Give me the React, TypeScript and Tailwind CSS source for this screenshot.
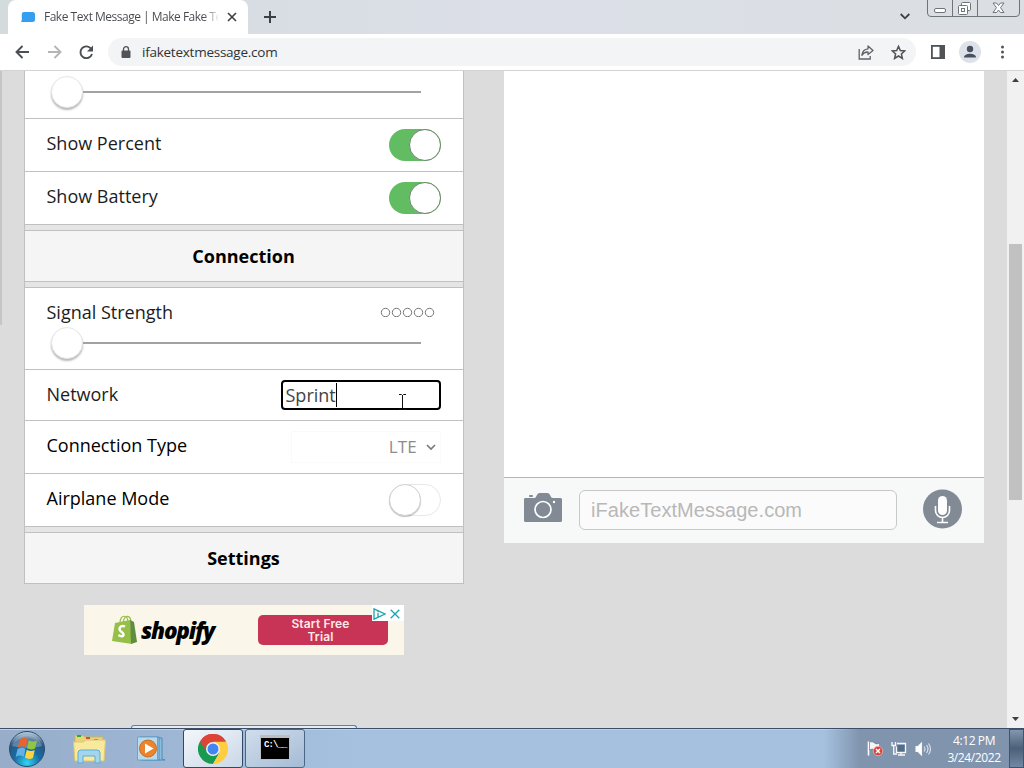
import React, { useState } from 'react';

const TabStrip: React.FC = () => (
  <div className="flex h-[34px] items-end bg-linear-to-r from-[#d3dbdd] via-[#dcdfe8] to-[#dbdfe3]">
    <div className="ml-2 flex h-[34px] w-[240px] items-center rounded-t-lg bg-white pl-[13px]">
      <svg width="14" height="10" viewBox="0 0 14 10">
        <path d="M2.500 0h9Q14 0 14 2.500v5q0 2.500-2.500 2.500H0l.8-2V2.500Q.8 0 2.500 0z" fill="#349ff0" />
      </svg>
      <div className="ml-[9px] w-[177px] whitespace-nowrap bg-linear-to-r from-[#45484c] from-90% to-white to-99% bg-clip-text text-[12px] tracking-[-0.5px] text-transparent">
        Fake Text Message | Make Fake Te
      </div>
      <svg className="ml-[6px]" width="10" height="10" viewBox="0 0 10 10" stroke="#3c4043" strokeWidth="1.6">
        <path d="M1 1l8 8M9 1L1 9" />
      </svg>
    </div>
    <svg className="mb-[11px] ml-4" width="12" height="12" viewBox="0 0 12 12" stroke="#3c4043" strokeWidth="2">
      <path d="M6 0v12M0 6h12" />
    </svg>
    <svg className="mb-[14px] ml-auto" width="10" height="7" viewBox="0 0 10 7" fill="none" stroke="#3c4043" strokeWidth="1.800">
      <path d="M0.7 1L5 5.3L9.3 1" />
    </svg>
    <svg className="ml-[17px] self-start" width="97" height="18" viewBox="0 0 97 18" fill="none" stroke="#6d7579">
      <path d="M.5 0v13q0 3.500 3.500 3.500h85q3.500 0 3.500-3.500V0M25.500 0v16.500M50.500 0v16.500" />
      <rect x="7.500" y="8.500" width="11" height="4" rx="1.500" fill="#fff" />
      <rect x="34.500" y="2.500" width="9" height="8" rx="1" fill="#fff" />
      <rect x="31.500" y="5.500" width="9" height="9" rx="1" fill="#fff" />
      <rect x="34.500" y="8.500" width="3" height="3" />
      <path d="M66 3h3.500l2 2.500l2-2.500H77l-3.500 4.700L77 12.500h-3.500l-2-2.500l-2 2.500H66l3.500-4.800z" fill="#fff" />
    </svg>
  </div>
);

const Toolbar: React.FC = () => (
  <div className="flex h-[37px] items-center border-b border-[#d4d4d4] bg-white">
    <svg className="ml-[15px]" width="15" height="14" viewBox="0 0 15 14" fill="none" stroke="#4b4e52" strokeWidth="1.9">
      <path d="M14 7H2M7.500 1L1.500 7l6 6" />
    </svg>
    <svg className="ml-[17px]" width="15" height="14" viewBox="0 0 15 14" fill="none" stroke="#b4b5b7" strokeWidth="1.9">
      <path d="M1 7h12M7.500 1l6 6l-6 6" />
    </svg>
    <svg className="ml-[17px]" width="15" height="15" viewBox="0 0 15 15" fill="none" stroke="#4b4e52" strokeWidth="1.9">
      <path d="M12.300 4A5.900 5.900 0 1 0 13 9" />
      <path d="M14 .5v6H8z" fill="#4b4e52" stroke="none" />
    </svg>
    <div className="ml-[14px] flex h-7 w-[808px] items-center rounded-full bg-[#f2f4f5] pl-[13px]">
      <svg width="10" height="13" viewBox="0 0 10 13">
        <rect x="0.500" y="4.500" width="9" height="7.500" rx="1" fill="#505357" />
        <path d="M2.500 5V3.200a2.500 2.500 0 0 1 5 0V5" fill="none" stroke="#505357" strokeWidth="1.300" />
      </svg>
      <span className="ml-[11px] text-[13.500px] tracking-[-0.25px] text-[#303336]">ifaketextmessage.com</span>
      <svg className="ml-auto" width="16" height="15" viewBox="0 0 16 15" fill="none" stroke="#5f6368" strokeWidth="1.300">
        <path d="M1.200 4v10h11v-3" />
        <path d="M10 1l5 4.500l-5 4V7Q6 6.800 3.800 10.300Q4.500 4.400 10 3.800z" strokeLinejoin="round" />
      </svg>
      <svg className="ml-[17px] mr-[10px]" width="15" height="15" viewBox="0 0 15 15" fill="none" stroke="#505357" strokeWidth="1.500">
        <path d="M7.500 1.300l1.800 4.200l4.500.4l-3.400 3l1 4.500l-3.900-2.400l-3.900 2.400l1-4.500l-3.400-3l4.500-.4z" />
      </svg>
    </div>
    <svg className="ml-[15px]" width="14" height="14" viewBox="0 0 14 14">
      <rect x="0.900" y="0.900" width="12.200" height="12.200" fill="none" stroke="#505357" strokeWidth="1.800" />
      <rect x="8.500" y="0" width="5.500" height="14" fill="#505357" />
    </svg>
    <svg className="ml-[14px]" width="22" height="22" viewBox="0 0 22 22">
      <circle cx="11" cy="11" r="11" fill="#dde1e8" />
      <circle cx="11" cy="8" r="3.200" fill="#48505f" />
      <path d="M5 16.500c0-5 12-5 12 0z" fill="#48505f" />
    </svg>
    <svg className="ml-5" width="4" height="14" viewBox="0 0 4 14" fill="#505357">
      <circle cx="1.500" cy="2" r="1.500" />
      <circle cx="1.500" cy="7" r="1.500" />
      <circle cx="1.500" cy="12" r="1.500" />
    </svg>
  </div>
);

const Slider: React.FC = () => (
  <div className="flex h-8 items-center pl-[26px]">
    <div className="h-8 w-8 rounded-full border border-[#e6e6e6] bg-white shadow-[0_2px_2px_rgba(0,0,0,0.28)]" />
    <div className="h-[2px] w-[338px] bg-[#a2a2a2]" />
  </div>
);

const Toggle: React.FC<{ initial: boolean }> = ({ initial }) => {
  const [on, setOn] = useState(initial);
  return (
    <button
      onClick={() => setOn(!on)}
      className={
        on
          ? 'flex h-8 w-[52px] justify-end rounded-full bg-[#62bd62]'
          : 'flex h-8 w-[52px] justify-start rounded-full border border-[#e8e8e8] bg-white'
      }
    >
      <span
        className={
          on
            ? 'h-8 w-8 rounded-full border border-[#6c876c] bg-white'
            : '-ml-px -mt-px h-8 w-8 rounded-full border border-[#d2d2d2] bg-white shadow-[0_1px_1px_rgba(0,0,0,0.25)]'
        }
      />
    </button>
  );
};

const Heading: React.FC<{ children: React.ReactNode }> = ({ children }) => (
  <h2 className="flex h-[52px] items-center justify-center border-y border-[#c0c0c0] bg-[#f5f5f5] pr-px text-[18px] font-bold text-black">
    {children}
  </h2>
);

const OptionsPanel: React.FC = () => {
  const [network, setNetwork] = useState('Sprint');

  return (
    <div className="w-[440px] border-x border-[#c0c0c0] bg-[#e5e5e5] text-[18px] text-[#1c1c1c]">
      <div className="h-12 border-b border-[#c0c0c0] bg-white pt-[5px]">
        <Slider />
      </div>
      <div className="flex h-[53px] items-center justify-between border-b border-[#c0c0c0] bg-white pl-[21.500px] pr-[22px]">
        <span className="-mt-[3px]">Show Percent</span>
        <Toggle initial={true} />
      </div>
      <div className="mb-[5px] flex h-[53px] items-center justify-between border-b border-[#c0c0c0] bg-white pl-[21.500px] pr-[22px]">
        <span className="-mt-[3px]">Show Battery</span>
        <Toggle initial={true} />
      </div>
      <Heading>Connection</Heading>
      <div className="mt-[5px] h-[83px] border-y border-[#c0c0c0] bg-white pt-[10px]">
        <div className="mb-px flex h-[28px] items-center justify-between pl-[21.500px] pr-7">
          <span>Signal Strength</span>
          <svg width="55" height="10" viewBox="0 0 55 10" fill="none" stroke="#777">
            <circle cx="5.500" cy="5.500" r="4.200" />
            <circle cx="16.500" cy="5.500" r="4.200" />
            <circle cx="27.500" cy="5.500" r="4.200" />
            <circle cx="38.500" cy="5.500" r="4.200" />
            <circle cx="49.500" cy="5.500" r="4.200" />
          </svg>
        </div>
        <Slider />
      </div>
      <div className="flex h-[51px] items-center justify-between border-b border-[#c0c0c0] bg-white pl-[21.500px] pr-[22px]">
        <span className="-mt-px">Network</span>
        <div className="relative">
          <div className="flex h-[30px] w-[160px] items-center rounded-[4px] border-2 border-black bg-white pl-[2.500px] text-[#444]">
            <input
              type="text"
              value={network}
              onChange={(e) => setNetwork(e.target.value)}
              className="w-[50.500px] outline-none"
            />
            <div className="h-6 w-px bg-black" />
          </div>
          {/* text cursor */}
          <svg className="absolute left-[117px] top-[14px]" width="9" height="16" viewBox="0 0 9 16" fill="none" stroke="#111">
            <path d="M1 .5h2.500l1 1l1-1H8M4.500 1v13.500M1 15.500h2.500l1-1l1 1H8" />
          </svg>
        </div>
      </div>
      <div className="flex h-[53px] items-center justify-between border-b border-[#c0c0c0] bg-white pl-[21.500px] pr-[22px] text-black">
        <span className="-mt-[3px]">Connection Type</span>
        <div className="flex h-8 w-[150px] items-center justify-end border border-[#fafafa] pr-1 text-[17px] text-[#8c8c8c]">
          <span className="tracking-[0.2px]">LTE</span>
          <svg className="ml-[9px]" width="10" height="7" viewBox="0 0 10 7" fill="none" stroke="#777" strokeWidth="1.600">
            <path d="M1 1l4 4l4-4" />
          </svg>
        </div>
      </div>
      <div className="mb-[5px] flex h-[53px] items-center justify-between border-b border-[#c0c0c0] bg-white pl-[21.500px] pr-[22px] text-black">
        <span className="-mt-[3px]">Airplane Mode</span>
        <Toggle initial={false} />
      </div>
      <Heading>Settings</Heading>
    </div>
  );
};

const ShopifyAd: React.FC = () => (
  <div className="relative ml-[60px] mt-[21px] flex h-[50px] w-[320px] items-center bg-[#fbf6ea]">
    <svg className="ml-7" width="26" height="30" viewBox="0 0 26 30">
      <path d="M8 8c0-9 8-9 8 0M11 8c1-8 7-9 8-2" fill="none" stroke="#95bf47" strokeWidth="1.200" />
      <path d="M3 8L18 5l2 24L0 26z" fill="#95bf47" />
      <path d="M18 5l4 2l3 20l-6 2z" fill="#5e8e3e" />
      <path d="M13 11.500c-3-1.500-5.500 0-5.500 2.500c0 3 4 3 4 5.500c0 2.200-3 2-5 .5" fill="none" stroke="#fff" strokeWidth="2.500" />
    </svg>
    <span className="ml-[3px] mt-0.5 text-[22.500px] font-extrabold italic leading-none tracking-[-1.200px] text-black">shopify</span>
    <button className="absolute left-[174px] top-[10px] h-[30px] w-[130px] rounded-[5px] bg-[#c73455] pr-[5px] font-[Inter] text-[12px] font-semibold leading-[13px] tracking-[0.150px] text-[#ffe9e8]">
      Start Free
      <br />
      Trial
    </button>
    <div className="absolute right-0 top-0 flex h-[16px] w-8 items-center gap-[4px] bg-white pl-[1px] pt-px">
      <svg width="13" height="12" viewBox="0 0 13 12" fill="none" stroke="#18a5ad" strokeWidth="1.300">
        <path d="M1 .8l11 5.200L1 11.200zM5 5v4M5 3v1.200" />
      </svg>
      <svg width="10" height="10" viewBox="0 0 10 10" stroke="#18a5ad" strokeWidth="1.300">
        <path d="M.7 .7l8.600 8.600M9.300 .7L.7 9.300" />
      </svg>
    </div>
  </div>
);

const PhonePreview: React.FC = () => (
  <div className="ml-10 h-[472px] w-[480px] bg-white">
    <div className="h-[406px]" />
    <div className="flex h-[66px] items-start border-t border-[#b4b5b6] bg-[#f7f8f8] pt-3">
      <svg className="ml-5 mt-[3px]" width="38" height="29" viewBox="0 0 38 29">
        <path d="M1 5h9q1.500 0 2.200-1.500l1-2Q14 0 15.500 0h8q1.500 0 2.300 1.500l1 2Q27.500 5 29 5h7.500q1.500 0 1.500 1.500v21q0 1.500-1.500 1.500h-35Q0 29 0 27.500v-21Q0 5 1 5z" fill="#818a95" />
        <rect x="5" y="2" width="4" height="2" rx="1" fill="#818a95" />
        <circle cx="19" cy="16.500" r="8" fill="none" stroke="#fff" strokeWidth="1.700" />
        <circle cx="30" cy="9" r="1.200" fill="#fff" />
      </svg>
      <div className="ml-[17px] flex h-10 w-[318px] items-center rounded-[6px] border border-[#c8c8cb] bg-[#fbfbfb] pl-[11px] font-[Liberation_Sans,Arial,sans-serif] text-[20px] tracking-[0.050px] text-[#b8b8b8]">
        iFakeTextMessage.com
      </div>
      <svg className="-mt-px ml-[26px]" width="39" height="40" viewBox="0 0 39 40" fill="none" stroke="#fff">
        <circle cx="19.500" cy="20" r="19.500" fill="#818a95" stroke="none" />
        <rect x="15" y="7" width="9" height="19" rx="4.500" fill="#fff" stroke="none" />
        <path d="M12.500 17v4.500a7 7 0 0 0 14 0V17M19.500 28.500v4.500M14 33.500h11" strokeWidth="1.600" />
      </svg>
    </div>
  </div>
);

const Scrollbar: React.FC = () => (
  <div className="ml-auto flex w-[17px] flex-col items-center bg-[#f1f1f1]">
    <svg className="mt-[7px]" width="7" height="4" viewBox="0 0 7 4" fill="#404040">
      <path d="M0 4L3.500 0L7 4z" />
    </svg>
    <div className="mt-[162px] h-[256px] w-[13px] bg-[#c1c1c1]" />
    <svg className="mb-[7px] mt-auto" width="7" height="4" viewBox="0 0 7 4" fill="#404040">
      <path d="M0 0L3.500 4L7 0z" />
    </svg>
  </div>
);

const StartOrb: React.FC = () => (
  <svg className="ml-2" width="38" height="38" viewBox="0 0 38 38">
    <defs>
      <radialGradient id="orb" cx="50%" cy="90%" r="85%">
        <stop offset="0" stopColor="#32d5f2" />
        <stop offset="0.450" stopColor="#176ca4" />
        <stop offset="0.800" stopColor="#2b5680" />
        <stop offset="1" stopColor="#a9c2d4" />
      </radialGradient>
    </defs>
    <circle cx="19" cy="19" r="17.500" fill="url(#orb)" stroke="#294d6c" />
    <path d="M4 16A15.500 15.500 0 0 1 34 16Q19 20 4 16z" fill="#fff" opacity="0.250" />
    <path d="M12 9.500q4-3 7.500-.5l-1.700 8.500q-4-2.500-8 0z" fill="#e8642e" />
    <path d="M20.800 10.200q4 2.500 8.200.3l-2 8q-4 2-8-.2z" fill="#91c73e" />
    <path d="M9.500 19q4-2.500 8-.2l-1.800 8q-4-2.500-8 .2z" fill="#63b1e8" />
    <path d="M18.800 19.700q4 2.300 8 .3l-1.900 8q-4 2-8-.5z" fill="#ffd23e" />
  </svg>
);

const Taskbar: React.FC = () => (
  <div className="flex h-10 items-center border-t border-[#3c4d69] bg-linear-to-r from-[#97adca] via-[#a5c1df] via-35% to-[#a5c1df] shadow-[inset_0_1px_0_#bfd2e6]">
    <StartOrb />
    <svg className="ml-[27px]" width="33" height="30" viewBox="0 0 33 30">
      <path d="M2 5V1.500h8L12 3h18v23H2z" fill="#ead477" stroke="#cdb560" />
      <path d="M4 2h4" stroke="#28a745" strokeWidth="2" />
      <path d="M13 4h4" stroke="#cc4f39" strokeWidth="2" />
      <path d="M21 6h4" stroke="#367bd0" strokeWidth="2" />
      <path d="M.5 8h10l2-2h20L31 27H2z" fill="#f8e99f" stroke="#dcc873" />
      <path d="M5 29V19q0-3 3-3h16q3 0 3 3v10h-5v-7H10v7z" fill="#a2d6ee" stroke="#5fabd2" />
    </svg>
    <svg className="ml-[31px]" width="29" height="26" viewBox="0 0 29 26">
      <path d="M5 2h20v21l3 1H6z" fill="#8ebddd" stroke="#4c8bb9" />
      <path d="M3 1h19v23H3z" fill="#a9d2eb" stroke="#4c8bb9" />
      <path d="M.5 1h20v23H.5z" fill="#b9daec" stroke="#6ba5c7" />
      <circle cx="11" cy="12.500" r="8.500" fill="#ec842c" stroke="#c96d23" />
      <path d="M8 7.500l8.500 5L8 17.500z" fill="#fff" />
    </svg>
    <div className="ml-[17px] flex h-[39px] w-[60px] items-center justify-center rounded-[3px] border border-[#314966] bg-linear-to-br from-[#f4f7fa] to-[#cad7e7]">
      <svg width="30" height="30" viewBox="0 0 30 30">
        <path d="M15 15L2 7.500A15 15 0 0 1 28 7.500z" fill="#db4437" />
        <path d="M15 15L2 7.500A15 15 0 0 0 15 30L21.500 18.700z" fill="#189a50" />
        <path d="M15 7.500h13A15 15 0 0 1 15 30l6.500-11.300z" fill="#ffcd40" />
        <path d="M2 7.500A15 15 0 0 1 28 7.500H15A7.500 7.500 0 0 0 8 17z" fill="#db4437" />
        <circle cx="15" cy="15" r="7" fill="#f1f1f1" />
        <circle cx="15" cy="15" r="5.500" fill="#4285f4" />
      </svg>
    </div>
    <div className="ml-0.5 flex h-[39px] w-[60px] items-center justify-center rounded-[3px] border border-[#4d6686] bg-linear-to-br from-[#d1deeb] to-[#a4bbd6]">
      <div className="mb-0.5 h-[25px] w-[30px] whitespace-nowrap border border-t-[3px] border-[#b9bec4] bg-black pl-[3px] pt-[3px] font-[Liberation_Mono,monospace] text-[9px] font-bold leading-[9px] tracking-[-0.9px] text-white">
        C:\__
      </div>
    </div>
    <div className="ml-auto flex h-[39px] w-[200px] items-center bg-linear-to-r from-transparent to-[#8194ae] to-18% pl-[43px]">
      <svg width="17" height="17" viewBox="0 0 17 17">
        <path d="M1.500 1.500v14" stroke="#fff" strokeWidth="1.600" />
        <path d="M2.500 2q3-1 5 1t5 0v7q-3 2-5 0t-5 0z" fill="#f5f6f8" stroke="#677489" strokeWidth="0.600" />
        <circle cx="11" cy="11" r="4.700" fill="#d4443c" stroke="#fbc9c3" strokeWidth="0.600" />
        <path d="M9 9l4 4M13 9l-4 4" stroke="#fff" strokeWidth="1.500" />
      </svg>
      <svg className="ml-[7px]" width="16" height="15" viewBox="0 0 16 15" fill="none" stroke="#f5f7fa" strokeWidth="1.300">
        <path d="M1 1v3.500h3.500V1M2.700 4.500V13H6" />
        <path d="M6 2.500h8.500v9H5.500v-6M7 14h7M10 11.500V14" />
        <rect x="6.500" y="4" width="7" height="6.500" fill="#536d88" stroke="none" />
      </svg>
      <svg className="ml-[8px]" width="17" height="14" viewBox="0 0 17 14" fill="none" stroke="#f5f7fa" strokeWidth="1.100">
        <path d="M1 4.500h2L6.500 1v12L3 9.500H1z" fill="#fff" />
        <path d="M9 4.500q2 2.500 0 5M11.500 3q3 4 0 8M13.500 1.500q4 5.500 0 11" opacity="0.8" />
      </svg>
      <div className="ml-auto mr-[9px] w-[52px] whitespace-nowrap text-center text-[12px] leading-[17px] tracking-[-0.400px] text-white">
        <div>4:12 PM</div>
        <div className="-mx-1">3/24/2022</div>
      </div>
      <div className="h-[39px] w-[15px] border border-[#43536b] bg-linear-to-b from-[#8297ae] via-[#4d6079] to-[#7188a4]" />
    </div>
  </div>
);

const App: React.FC = () => {
  return (
    <div className="flex h-[768px] w-[1024px] flex-col overflow-hidden font-[Open_Sans,Noto_Sans,sans-serif]">
      <TabStrip />
      <Toolbar />
      <div className="flex h-[657px] bg-[#dcdcdc]">
        <div className="w-6">
          <div className="h-[254px] w-[2px] bg-[#c6c6c6]" />
        </div>
        <div className="w-[440px]">
          <OptionsPanel />
          <ShopifyAd />
          <div className="ml-[107px] mt-[70px] h-[3px] w-[226px] rounded-t-[5px] border border-b-0 border-[#3d88d0] bg-[#e6edf2]" />
        </div>
        <PhonePreview />
        <Scrollbar />
      </div>
      <Taskbar />
    </div>
  );
};

export default App;
